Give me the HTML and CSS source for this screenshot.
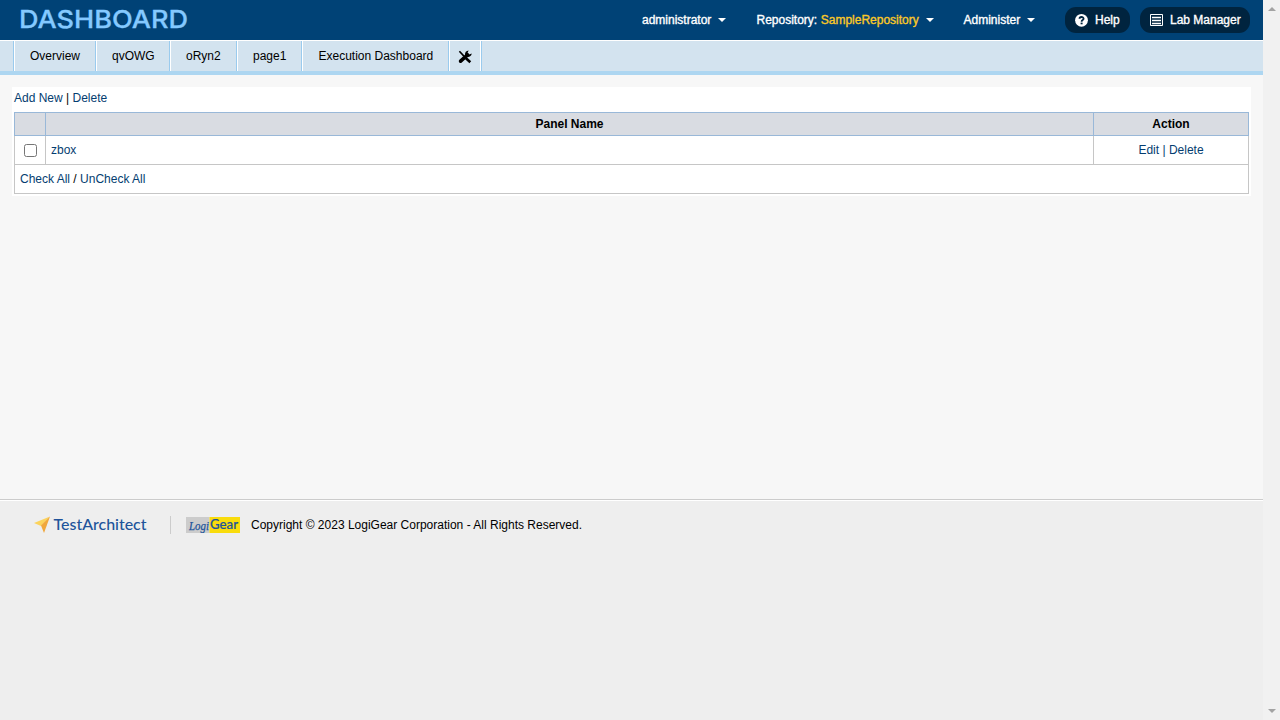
FILE: index.html
```html
<!DOCTYPE html>
<html lang="en">
<head>
<meta charset="utf-8">
<title>Dashboard</title>
<link rel="stylesheet" href="styles.css">
</head>
<body>
<div class="page">
  <header class="header">
    <svg class="brand" width="176" height="30"><text x="-1" y="19" textLength="169" lengthAdjust="spacingAndGlyphs">DASHBOARD</text></svg>
    <nav class="menu">
      <a class="menu-item user">administrator<i class="caret"></i></a>
      <a class="menu-item repo"><span>Repository:</span> <span class="repo-name">SampleRepository</span><i class="caret"></i></a>
      <a class="menu-item admin">Administer<i class="caret"></i></a>
      <a class="pill help"><svg width="14" height="14" viewBox="0 0 14 14"><circle cx="6.5" cy="7.3" r="6.4" fill="#fff"/><path d="M4.5 5.8C4.5 3.4 8.6 3.4 8.6 5.7C8.6 7.1 6.6 7 6.6 8.7" fill="none" stroke="#00243f" stroke-width="1.8"/><rect x="5.6" y="9.6" width="2" height="1.7" fill="#00243f"/></svg><span>Help</span></a>
      <a class="pill lab"><svg width="13" height="12" viewBox="0 0 13 12"><path d="M.5 .5h12v11H.5z" fill="none" stroke="#fff"/><path d="M2 3.5h9M2 6.5h9M2 9.5h9" stroke="#fff" stroke-width="1.3"/></svg><span>Lab Manager</span></a>
    </nav>
  </header>
  <nav class="tabs">
    <a class="tab overview">Overview</a>
    <a class="tab qv">qvOWG</a>
    <a class="tab oryn">oRyn2</a>
    <a class="tab page1">page1</a>
    <a class="tab exec">Execution Dashboard</a>
    <a class="tab tools"><svg width="14" height="14" viewBox="0 0 14 14"><path d="M.8 1.8L2 .8L6.5 5.6L5.3 6.7Z" fill="#000"/><path d="M8 8.2L12.3 12.2" stroke="#000" stroke-width="2.6"/><path d="M2.6 11.2L9.5 4.9" stroke="#000" stroke-width="3.6" stroke-linecap="round"/><path d="M10.6 .6C8.3 .8 6.6 2.5 7.1 4.9L8.9 7C11.5 7.3 13.6 5.8 13.7 3.6L11.3 4.5L9.6 2.7Z" fill="#000"/></svg></a>
  </nav>
  <main class="content">
    <section class="panel">
      <div class="actions"><a>Add New</a> | <a>Delete</a></div>
      <table class="grid">
        <colgroup><col class="c-check"><col class="c-name"><col class="c-action"></colgroup>
        <thead><tr><th></th><th>Panel Name</th><th>Action</th></tr></thead>
        <tbody>
          <tr><td class="check"><input type="checkbox"></td><td><a>zbox</a></td><td class="row-actions"><a>Edit</a> | <a>Delete</a></td></tr>
          <tr><td colspan="3"><a>Check All</a> / <a>UnCheck All</a></td></tr>
        </tbody>
      </table>
    </section>
  </main>
  <footer class="footer">
    <svg class="ta" width="114" height="20" viewBox="0 0 114 20"><path d="M0 7L16 .5L7 10Z" fill="#fbd35c"/><path d="M16 .5L10 17L7 9.5Z" fill="#f0a73c"/><text class="ta-name" x="19.5" y="14" textLength="93" lengthAdjust="spacingAndGlyphs">TestArchitect</text></svg>
    <span class="rule"></span>
    <svg class="lg" width="54" height="16" viewBox="0 0 54 16"><path d="M0 0h23.5v16H0z" fill="#ccc"/><path d="M23.5 0h30.5v16H23.5z" fill="#f9dc0c"/><text class="logi" x="3" y="12.5" textLength="20" lengthAdjust="spacingAndGlyphs">Logi</text><text class="gear" x="24" y="12.3" textLength="28" lengthAdjust="spacingAndGlyphs">Gear</text></svg>
    <span class="copy">Copyright © 2023 LogiGear Corporation - All Rights Reserved.</span>
  </footer>
</div>
<div class="scrollbar"><i class="up"></i><i class="down"></i></div>
</body>
</html>
```
FILE: styles.css
```css
* { box-sizing: border-box; }
body { margin: 0; display: flex; width: 1280px; height: 720px; overflow: hidden; font: 12px/16px "Liberation Sans", Arial, sans-serif; color: #000; }
.page { width: 1263px; height: 720px; display: flex; flex-direction: column; background: #f7f7f7; }
.header { height: 40px; flex: none; background: #004276; display: flex; justify-content: space-between; padding: 7px 13px 0 20px; color: #fff; }
.brand { margin-top: 2px; overflow: visible; }
.brand text { font: 500 24.5px Inter, sans-serif; fill: #84c9ff; stroke: #84c9ff; stroke-width: .3px; }
.menu { display: flex; height: 26px; align-items: center; -webkit-text-stroke: .35px currentColor; }
.menu-item { display: flex; align-items: center; white-space: pre; }
.user { width: 114.5px; }
.repo { width: 207px; }
.admin { width: 101.5px; }
.repo-name { color: #fbc926; margin-left: 3.5px; }
.caret { border: 4px solid transparent; border-top-color: #fff; border-bottom: 0; margin-left: 7px; }
.pill { height: 26px; border-radius: 11px; background: #00243f; display: flex; align-items: center; padding-left: 10px; }
.help { width: 65px; margin-right: 10px; }
.help span { margin-left: 6px; }
.lab { width: 110px; }
.lab span { margin-left: 7px; }
.tabs { height: 35px; flex: none; display: flex; background: #d3e3ef; border-top: 1px solid #fff; border-bottom: 4px solid #add6f1; padding-left: 14px; }
.tab { border-left: 1px solid #fff; border-right: 1px solid #9acbee; padding-left: 15px; line-height: 30px; white-space: nowrap; }
.overview { width: 82px; box-shadow: -1px 0 #9acbee; }
.qv { width: 74px; }
.oryn { width: 67px; }
.page1 { width: 65px; }
.exec { width: 147px; padding-left: 15.5px; }
.tools { width: 33px; padding: 9px 0 0 8px; line-height: 0; border-right: 0; box-shadow: inset -1px 0 #9acbee, inset -2px 0 #fff; }
.content { height: 424px; flex: none; padding: 12px 12px 0; }
.panel { height: 109px; background: #fff; padding: 3px 2px 0; }
.actions { height: 22px; }
a { color: inherit; }
.actions a, .grid a { color: #043d70; }
.grid { width: 1235px; border-collapse: collapse; table-layout: fixed; }
.c-check { width: 31px; }
.c-action { width: 155px; }
.grid th { height: 23px; padding: 0; background: #d9dce2; border: 1px solid #99b8d8; }
.grid td { height: 29px; padding: 0 5px; border: 1px solid #c6c6c6; }
.grid .row-actions { text-align: center; color: #043d70; }
.check input { display: block; width: 13px; height: 13px; margin: 1px 0 0 4px; }
.footer { flex: 1; background: #eee; border-top: 1px solid #ccc; box-shadow: inset 0 1px #fff; display: flex; align-items: flex-start; padding: 15px 0 0 34px; }
.ta { margin-top: 1px; }
.ta-name { font: 500 14.5px Lato, sans-serif; fill: #20539a; }
.rule { width: 1px; height: 18px; background: #ccc; margin: 1px 15px 0 22px; }
.lg { margin-top: 2px; }
.logi { font: italic 13.5px "Liberation Serif", serif; fill: #20539a; stroke: #20539a; stroke-width: .25px; }
.gear { font: 500 12.5px Lato, sans-serif; fill: #20539a; stroke: #20539a; stroke-width: .2px; }
.copy { margin: 2px 0 0 11px; }
.scrollbar { width: 17px; height: 720px; background: #f1f1f1; display: flex; flex-direction: column; justify-content: space-between; align-items: center; padding: 7px 0; }
.up, .down { border: 4px solid transparent; }
.up { border-bottom-color: #a3a3a3; border-top: 0; }
.down { border-top-color: #a3a3a3; border-bottom: 0; }
```
